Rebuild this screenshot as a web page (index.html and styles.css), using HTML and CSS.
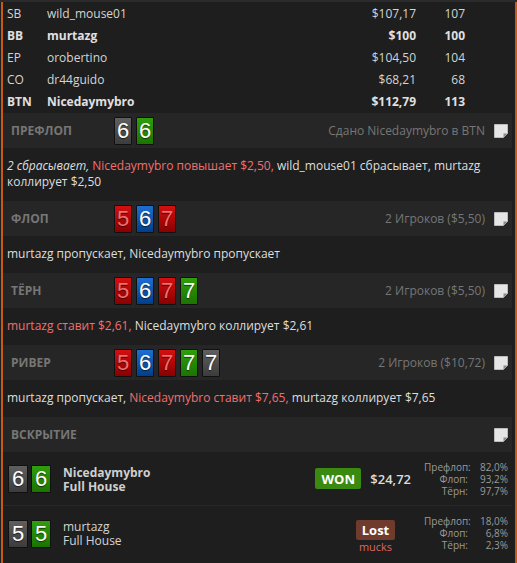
FILE: index.html
```html
<!DOCTYPE html>
<html>
<head>
<meta charset="utf-8">
<link rel="stylesheet" href="styles.css">
</head>
<body>
<div class="topstrip"></div>
<div class="panel">
  <div class="players">
    <div class="prow"><span>SB</span><span>wild_mouse01</span><span class="amt">$107,17</span><span class="bb">107</span></div>
    <div class="prow bold"><span>BB</span><span>murtazg</span><span class="amt">$100</span><span class="bb">100</span></div>
    <div class="prow"><span>EP</span><span>orobertino</span><span class="amt">$104,50</span><span class="bb">104</span></div>
    <div class="prow"><span>CO</span><span>dr44guido</span><span class="amt">$68,21</span><span class="bb">68</span></div>
    <div class="prow bold"><span>BTN</span><span>Nicedaymybro</span><span class="amt">$112,79</span><span class="bb">113</span></div>
  </div>

  <div class="band">
    <span class="label">ПРЕФЛОП</span>
    <div class="cards"><span class="card grey">6</span><span class="card green">6</span></div>
    <span class="info">Сдано Nicedaymybro в BTN</span>
    <span class="note"><svg width="14" height="14" viewBox="0 0 14 14"><path d="M0.5 0.5H13.5V9.5L9.5 13.5H0.5Z" fill="#e6e6e6" stroke="#bdbdbd"/><path d="M13.5 9.5H9.5V13.5Z" fill="#8a8a8a"/></svg></span>
  </div>
  <div class="actions"><i>2 сбрасывает,</i> <span class="red">Nicedaymybro повышает $2,50,</span> wild_mouse01 сбрасывает, murtazg коллирует $2,50</div>

  <div class="band">
    <span class="label">ФЛОП</span>
    <div class="cards"><span class="card red">5</span><span class="card blue">6</span><span class="card red">7</span></div>
    <span class="info">2 Игроков ($5,50)</span>
    <span class="note"><svg width="14" height="14" viewBox="0 0 14 14"><path d="M0.5 0.5H13.5V9.5L9.5 13.5H0.5Z" fill="#e6e6e6" stroke="#bdbdbd"/><path d="M13.5 9.5H9.5V13.5Z" fill="#8a8a8a"/></svg></span>
  </div>
  <div class="actions">murtazg пропускает, Nicedaymybro пропускает</div>

  <div class="band">
    <span class="label">ТЁРН</span>
    <div class="cards"><span class="card red">5</span><span class="card blue">6</span><span class="card red">7</span><span class="card green">7</span></div>
    <span class="info">2 Игроков ($5,50)</span>
    <span class="note"><svg width="14" height="14" viewBox="0 0 14 14"><path d="M0.5 0.5H13.5V9.5L9.5 13.5H0.5Z" fill="#e6e6e6" stroke="#bdbdbd"/><path d="M13.5 9.5H9.5V13.5Z" fill="#8a8a8a"/></svg></span>
  </div>
  <div class="actions"><span class="red">murtazg ставит $2,61,</span> Nicedaymybro коллирует $2,61</div>

  <div class="band">
    <span class="label">РИВЕР</span>
    <div class="cards"><span class="card red">5</span><span class="card blue">6</span><span class="card red">7</span><span class="card green">7</span><span class="card grey">7</span></div>
    <span class="info">2 Игроков ($10,72)</span>
    <span class="note"><svg width="14" height="14" viewBox="0 0 14 14"><path d="M0.5 0.5H13.5V9.5L9.5 13.5H0.5Z" fill="#e6e6e6" stroke="#bdbdbd"/><path d="M13.5 9.5H9.5V13.5Z" fill="#8a8a8a"/></svg></span>
  </div>
  <div class="actions">murtazg пропускает, <span class="red">Nicedaymybro ставит $7,65,</span> murtazg коллирует $7,65</div>

  <div class="band">
    <span class="label">ВСКРЫТИЕ</span>
    <span class="info"></span>
    <span class="note"><svg width="14" height="14" viewBox="0 0 14 14"><path d="M0.5 0.5H13.5V9.5L9.5 13.5H0.5Z" fill="#e6e6e6" stroke="#bdbdbd"/><path d="M13.5 9.5H9.5V13.5Z" fill="#8a8a8a"/></svg></span>
  </div>

  <div class="srow sep">
    <div class="scards"><span class="card grey big">6</span><span class="card green big">6</span></div>
    <div class="sname b"><div>Nicedaymybro</div><div>Full House</div></div>
    <div class="result won-group"><span class="won">WON</span><span class="win">$24,72</span></div>
    <div class="stats"><span>Префлоп:</span><span>82,0%</span><span>Флоп:</span><span>93,2%</span><span>Тёрн:</span><span>97,7%</span></div>
  </div>
  <div class="srow">
    <div class="scards"><span class="card grey big">5</span><span class="card green big">5</span></div>
    <div class="sname"><div>murtazg</div><div>Full House</div></div>
    <div class="result lost-group"><span class="lost">Lost</span><span class="mucks">mucks</span></div>
    <div class="stats"><span>Префлоп:</span><span>18,0%</span><span>Флоп:</span><span>6,8%</span><span>Тёрн:</span><span>2,3%</span></div>
  </div>
</div>
</body>
</html>
```
FILE: styles.css
```css
html, body {
  margin: 0;
  padding: 0;
  background: #1e1e1e;
}
body {
  font-family: "Open Sans", "Noto Sans", sans-serif;
  font-size: 12px;
  color: #dcdcdc;
  width: 517px;
  height: 563px;
  overflow: hidden;
}
.topstrip {
  height: 2px;
  background: #2a2a2a;
}
.panel {
  margin-left: 1px;
  width: 509px;
  padding-right: 3px;
  border-left: 2px solid #c85a12;
  border-right: 2px solid #c85a12;
  height: 561px;
}
.prow {
  display: grid;
  grid-template-columns: 40px 1fr 80px 49px;
  height: 22px;
  align-items: center;
  padding-left: 4px;
  padding-right: 47px;
  color: #d4d4d4;
}
.prow.bold {
  font-weight: 700;
  color: #e0e0e0;
}
.prow .amt, .prow .bb {
  text-align: right;
}
.players {
  margin-bottom: 1px;
}
.band {
  height: 35px;
  background: #262626;
  display: flex;
  align-items: center;
  padding-left: 8px;
  padding-right: 4px;
}
.label {
  width: 103px;
  font-weight: 700;
  color: #767676;
  font-size: 12px;
}
.cards {
  display: flex;
  gap: 4px;
}
.card {
  display: flex;
  align-items: center;
  justify-content: center;
  box-sizing: border-box;
  width: 18px;
  height: 28px;
  border: 1px solid #111;
  border-radius: 1px;
  color: #fff;
  font-family: "Liberation Sans", Arial, sans-serif;
  font-size: 22px;
  line-height: 1;
  text-shadow: 0 1px 1px rgba(0,0,0,0.6);
}
.card.big {
  width: 20px;
  height: 28px;
}
.card.grey { background: linear-gradient(#5f5f5f, #3c3c3c); }
.card.green { background: linear-gradient(#2f9e0c, #1b7400); }
.card.red { background: linear-gradient(#d40f0f, #8a0000); }
.card.blue { background: linear-gradient(#1e6fd2, #003e88); }
.info {
  margin-left: auto;
  color: #767676;
  font-size: 12px;
}
.note {
  margin-left: 9px;
  width: 14px;
  height: 14px;
  display: flex;
}
.actions {
  padding: 10px 4px 11px 4px;
  line-height: 16px;
  color: #dedede;
}
.actions i {
  font-style: italic;
}
.red {
  color: #f07070;
}
.srow {
  height: 54px;
  display: flex;
  align-items: center;
  padding-left: 5px;
  padding-right: 4px;
}
.srow.sep {
  border-bottom: 1px solid #282828;
  height: 53px;
}
.scards {
  display: flex;
  gap: 3px;
  margin-top: 1px;
}
.sname {
  margin-left: 12px;
  line-height: 14px;
  color: #d4d4d4;
  margin-top: 2px;
}
.sname.b {
  font-weight: 700;
  color: #cfcfcf;
}
.result {
  margin-left: auto;
}
.won-group {
  display: flex;
  align-items: center;
  margin-right: 13px;
}
.won {
  background: #3a8a12;
  color: #fff;
  font-weight: 700;
  font-size: 13px;
  width: 46px;
  height: 21px;
  border-radius: 2px;
  display: flex;
  align-items: center;
  justify-content: center;
}
.win {
  margin-left: 9px;
  font-size: 13px;
  font-weight: 600;
  color: #dcdcdc;
}
.lost-group {
  display: flex;
  flex-direction: column;
  align-items: center;
  margin-right: 29px;
  margin-top: 8px;
}
.lost {
  background: #6e3b2d;
  color: #fff;
  font-weight: 700;
  font-size: 13px;
  width: 39px;
  height: 20px;
  border-radius: 2px;
  display: flex;
  align-items: center;
  justify-content: center;
}
.mucks {
  color: #d86868;
  font-size: 11px;
  line-height: 14px;
}
.stats {
  display: grid;
  grid-template-columns: 44px 40px;
  font-size: 10px;
  line-height: 12px;
  color: #9a9a9a;
}
.stats span {
  text-align: right;
}
```
